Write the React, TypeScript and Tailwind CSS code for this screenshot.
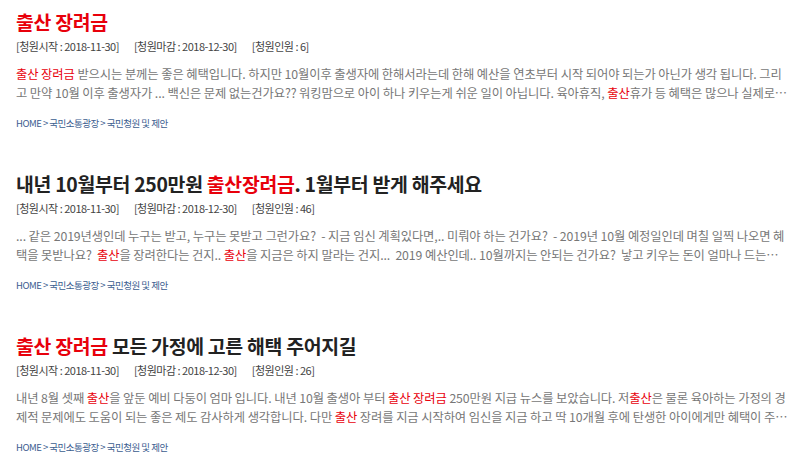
import React from 'react';

type Part = { t: string; hot?: boolean };

type Petition = {
  title: Part[];
  start: string;
  end: string;
  count: number;
  body: Part[];
};

const petitions: Petition[] = [
  {
    title: [{ t: '출산 장려금', hot: true }],
    start: '2018-11-30',
    end: '2018-12-30',
    count: 6,
    body: [
      { t: '출산 장려금', hot: true },
      { t: ' 받으시는 분께는 좋은 혜택입니다. 하지만 10월이후 출생자에 한해서라는데 한해 예산을 연초부터 시작 되어야 되는가 아닌가 생각 됩니다. 그리고 만약 10월 이후 출생자가 ... 백신은 문제 없는건가요?? 워킹맘으로 아이 하나 키우는게 쉬운 일이 아닙니다. 육아휴직, ' },
      { t: '출산', hot: true },
      { t: '휴가 등 혜택은 많으나 실제로 사용하기에는 어려움이 많습니다.' },
    ],
  },
  {
    title: [
      { t: '내년 10월부터 250만원 ' },
      { t: '출산장려금', hot: true },
      { t: '. 1월부터 받게 해주세요' },
    ],
    start: '2018-11-30',
    end: '2018-12-30',
    count: 46,
    body: [
      { t: '... 같은 2019년생인데 누구는 받고, 누구는 못받고 그런가요?\u00a0 - 지금 임신 계획있다면,.. 미뤄야 하는 건가요?\u00a0 - 2019년 10월 예정일인데 며칠 일찍 나오면 혜택을 못받나요?\u00a0 ' },
      { t: '출산', hot: true },
      { t: '을 장려한다는 건지.. ' },
      { t: '출산', hot: true },
      { t: '을 지금은 하지 말라는 건지...\u00a0 2019 예산인데.. 10월까지는 안되는 건가요?\u00a0 낳고 키우는 돈이 얼마나 드는지 아시나요?' },
    ],
  },
  {
    title: [
      { t: '출산 장려금', hot: true },
      { t: ' 모든 가정에 고른 해택 주어지길' },
    ],
    start: '2018-11-30',
    end: '2018-12-30',
    count: 26,
    body: [
      { t: '내년 8월 셋째 ' },
      { t: '출산', hot: true },
      { t: '을 앞둔 예비 다둥이 엄마 입니다. 내년 10월 출생아 부터 ' },
      { t: '출산 장려금', hot: true },
      { t: ' 250만원 지급 뉴스를 보았습니다. 저' },
      { t: '출산', hot: true },
      { t: '은 물론 육아하는 가정의 경제적 문제에도 도움이 되는 좋은 제도 감사하게 생각합니다. 다만 ' },
      { t: '출산', hot: true },
      { t: ' 장려를 지금 시작하여 임신을 지금 하고 딱 10개월 후에 탄생한 아이에게만 혜택이 주어지는 것은 아쉽습니다.' },
    ],
  },
];

const font = { fontFamily: '"Noto Sans CJK KR", "Noto Sans", sans-serif' };

const App: React.FC = () => {
  return (
    <div className="w-[800px] h-[459px] bg-white overflow-hidden pl-4 pr-[12px] pt-2" style={font}>
      {petitions.map((p, i) => (
        <div key={i} className="mb-[40px]">
          {/* TITLE */}
          <h2 className="text-[19.4px] leading-[28px] font-bold text-[#222] tracking-[-0.3px]">
            {p.title.map((s, j) => (
              <span key={j} className={s.hot ? 'text-[#e8000b]' : ''}>{s.t}</span>
            ))}
          </h2>

          {/* META */}
          <div className="flex gap-[15px] text-[11px] leading-[16px] text-[#444] mt-[2px] tracking-[-0.5px]">
            <span>[청원시작 : {p.start}]</span>
            <span>[청원마감 : {p.end}]</span>
            <span>[청원인원 : {p.count}]</span>
          </div>

          {/* BODY */}
          <p className="text-[12.3px] leading-[19px] text-[#777] mt-[11px] line-clamp-2 tracking-[-0.1px]">
            {p.body.map((s, j) => (
              <span key={j} className={s.hot ? 'text-[#e8000b]' : ''}>{s.t}</span>
            ))}
          </p>

          {/* BREADCRUMB */}
          <div className="text-[9.5px] leading-[14px] text-[#3b5d8f] mt-[13px] tracking-[-0.5px]">
            HOME &gt; 국민소통광장 &gt; 국민청원 및 제안
          </div>
        </div>
      ))}
    </div>
  );
};

export default App;
